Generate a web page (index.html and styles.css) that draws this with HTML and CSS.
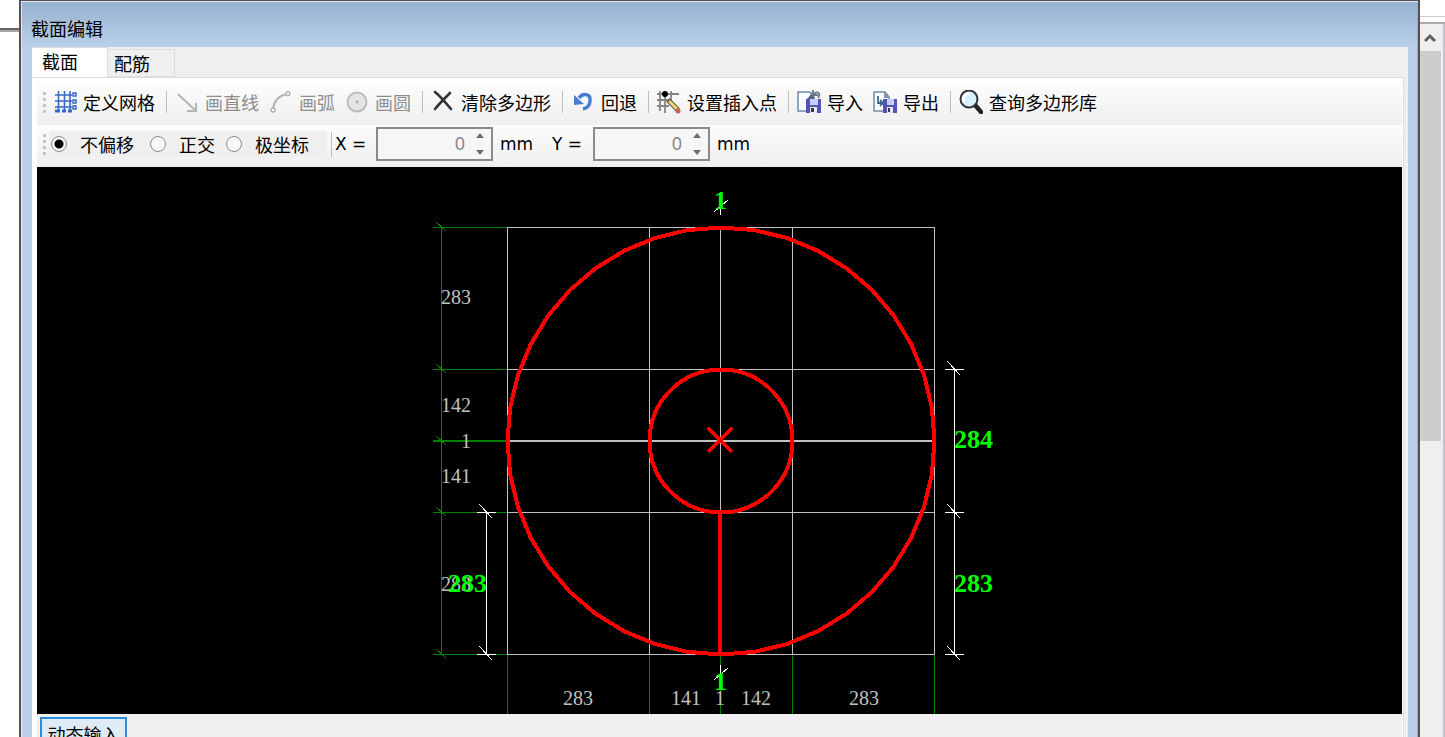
FILE: index.html
```html
<!DOCTYPE html>
<html lang="zh-CN">
<head>
<meta charset="utf-8">
<title>截面编辑</title>
<link rel="stylesheet" href="styles.css">
</head>
<body>
<div class="desktop">
  <div class="backdrop-left"></div>
  <section class="dialog">
    <header class="titlebar">截面编辑</header>
    <div class="client">
      <nav class="tabs" role="tablist">
        <button class="tab tab-active" role="tab" aria-selected="true">截面</button>
        <button class="tab" role="tab" aria-selected="false">配筋</button>
      </nav>
      <main class="panel">
        <div class="toolbar">
          <span class="grip"></span>
          <button class="tool"><svg class="icon" viewBox="0 0 24 24"><g stroke="#3a68c4" stroke-width="1.600" fill="none"><path d="M5.500 1v20M11.500 1v20M17 1v20M2 5h17M2 11h17M2 17h17"/><path d="M2 21h5M9 21h4M15 21h4" stroke-width="3"/><path d="M20 3h3v3h-3zM20 10h3v3h-3zM20 16h3v3h-3z" fill="#fff" stroke-width="1.500"/></g></svg>定义网格</button>
          <span class="sep"></span>
          <button class="tool" disabled><svg class="icon" viewBox="0 0 24 24"><path d="M3 4l17 16M21 13v8h-9" fill="none" stroke="#b4b4b4" stroke-width="2"/></svg>画直线</button>
          <button class="tool" disabled><svg class="icon" viewBox="0 0 24 24"><path d="M4 19C5 11 9 6 18 4" fill="none" stroke="#b4b4b4" stroke-width="2"/><g fill="#fff" stroke="#b4b4b4" stroke-width="1.500"><circle cx="4" cy="20" r="2"/><circle cx="19" cy="3.500" r="2"/></g></svg>画弧</button>
          <button class="tool" disabled><svg class="icon" viewBox="0 0 24 24"><circle cx="12" cy="12" r="9.500" fill="#e4e4e4" stroke="#bcbcbc" stroke-width="2"/><circle cx="12" cy="12" r="1.500" fill="#aaa"/></svg>画圆</button>
          <span class="sep"></span>
          <button class="tool"><svg class="icon" viewBox="0 0 24 24"><path d="M4 2c5 4 11 11 16 17M19 3C14 8 8 14 4 19" fill="none" stroke="#333" stroke-width="2.600" stroke-linecap="round"/></svg>清除多边形</button>
          <span class="sep"></span>
          <button class="tool"><svg class="icon" viewBox="0 0 24 24"><path d="M8 8C12 2 20 4 19 11c0 5-3 7-7 8" fill="none" stroke="#4a7dd0" stroke-width="3.500"/><path d="M3 5v10l10-1z" fill="#4a7dd0"/></svg>回退</button>
          <span class="sep"></span>
          <button class="tool"><svg class="icon" viewBox="0 0 24 24"><path d="M3 1v20M8 1v22M14 1v12M0 4h22M0 10h14M0 16h12" fill="none" stroke="#858585" stroke-width="1.800"/><circle cx="8" cy="4" r="3" fill="#000"/><path d="M11 10l10 10" stroke="#56503e" stroke-width="5"/><path d="M12 11l8 8" stroke="#f2d777" stroke-width="3"/><circle cx="21" cy="21" r="2.500" fill="#c56555"/></svg>设置插入点</button>
          <span class="sep"></span>
          <button class="tool"><svg class="icon" viewBox="0 0 24 24"><path d="M1 2h12l4 5v14H1z" fill="#fafcff" stroke="#7188a6" stroke-width="1.500"/><path d="M10 9l5-6 3 6z" fill="#536981"/><path d="M17 4c4-4 7 0 4 4M16 0v5h5" fill="none" stroke="#69788c" stroke-width="1.800"/><path d="M9 9h15v14H9z" fill="#5554b4"/><path d="M13 9h8v6h-8z" fill="#c6cef8"/><path d="M13 17h7v6h-7z" fill="#e7e8f4"/><path d="M14 18h3v4h-3z" fill="#363657"/></svg>导入</button>
          <button class="tool"><svg class="icon" viewBox="0 0 24 24"><path d="M1 2h11l4 5v14H1z" fill="#fafcff" stroke="#7188a6" stroke-width="1.500"/><path d="M11 2v6h5z" fill="#8394aa"/><path d="M5 6v7h4M7 10l3 3-3 3" fill="none" stroke="#40668c" stroke-width="1.800"/><path d="M10 9h14v14H10z" fill="#5554b4"/><path d="M14 9h7v6h-7z" fill="#c6cef8"/><path d="M14 17h6v6h-6z" fill="#e7e8f4"/><path d="M15 18h2v4h-2z" fill="#363657"/></svg>导出</button>
          <span class="sep"></span>
          <button class="tool"><svg class="icon" viewBox="0 0 24 24"><path d="M16 15l6 7" stroke="#222" stroke-width="4.500" stroke-linecap="round"/><circle cx="10" cy="9" r="8.500" fill="#d5f1ff" stroke="#333" stroke-width="2"/><path d="M5 12c-2-5 1-8 5-8" fill="none" stroke="#fff" stroke-width="3"/></svg>查询多边形库</button>
        </div>
        <div class="toolbar">
          <span class="grip"></span>
          <div class="modes">
            <label class="mode"><input type="radio" name="mode" checked>不偏移</label>
            <label class="mode"><input type="radio" name="mode">正交</label>
            <label class="mode"><input type="radio" name="mode">极坐标</label>
          </div>
          <span class="sep sep-coords"></span>
          <label class="axis" for="x">X =</label>
          <span class="spin"><input id="x" type="text" value="0"><span class="arrows"><button class="arrow" aria-label="X +"><svg viewBox="0 0 10 5"><path d="M1 5l4-5 4 5z"/></svg></button><button class="arrow" aria-label="X -"><svg viewBox="0 0 10 5"><path d="M1 0l4 5 4-5z"/></svg></button></span></span>
          <span class="unit">mm</span>
          <label class="axis" for="y">Y =</label>
          <span class="spin"><input id="y" type="text" value="0"><span class="arrows"><button class="arrow" aria-label="Y +"><svg viewBox="0 0 10 5"><path d="M1 5l4-5 4 5z"/></svg></button><button class="arrow" aria-label="Y -"><svg viewBox="0 0 10 5"><path d="M1 0l4 5 4-5z"/></svg></button></span></span>
          <span class="unit">mm</span>
        </div>
        <svg class="canvas" viewBox="37 167 1365 547">
          <defs>
            <g id="tick"><path d="M-9.500 0H9.500M-7 -8L6 6"/></g>
            <path id="quarter" d="M0 -213.500L33.400 -210.900L66 -203L96.900 -190.200L125.500 -172.700L151 -151L172.700 -125.500L190.200 -96.900L203 -66L210.900 -33.400L213.500 0"/>
          </defs>
          <g class="guide">
            <path d="M441.500 227V655M433 227.500H507M433 369.500H507M433 512.500H507M433 654.500H507M507.500 655V714M649.500 655V714M720.500 655V714M792.500 655V714M934.500 655V714"/>
            <path d="M433 441H507" stroke-width="2"/>
            <path d="M436 222l10 9M436 364l10 9M436 436l10 9M436 507l10 9M436 649l10 9"/>
          </g>
          <g class="grid">
            <path d="M507.500 227.500H934.500V654.500H507.500ZM649.500 227V654M720.500 227V654M792.500 227V654M507 369.500H935M507 512.500H935"/>
            <path d="M507 441H935" stroke-width="2"/>
          </g>
          <g class="label">
            <text x="441" y="304">283</text>
            <text x="441" y="412">142</text>
            <text x="461" y="448">1</text>
            <text x="441" y="483">141</text>
            <text x="441" y="591">283</text>
            <text x="563" y="705">283</text>
            <text x="671" y="705">141</text>
            <text x="715" y="705">1</text>
            <text x="741" y="705">142</text>
            <text x="849" y="705">283</text>
          </g>
          <g class="dimension">
            <path d="M486.500 512V654M954.500 369V654M720.500 205V215M714 212l14-12M720.500 665V678M714 680l14-12"/>
            <use href="#tick" x="486.500" y="512.500"/>
            <use href="#tick" x="486.500" y="654.500"/>
            <use href="#tick" x="954.500" y="369.500"/>
            <use href="#tick" x="954.500" y="512.500"/>
            <use href="#tick" x="954.500" y="654.500"/>
          </g>
          <g class="section">
            <g transform="translate(721 441)">
              <use href="#quarter"/>
              <use href="#quarter" transform="rotate(90)"/>
              <use href="#quarter" transform="rotate(180)"/>
              <use href="#quarter" transform="rotate(270)"/>
              <circle r="71.500"/>
            </g>
            <path d="M720 512V654M708 428l24 24M732 428l-24 24"/>
          </g>
          <g class="measure">
            <text x="714" y="209">1</text>
            <text x="714" y="690">1</text>
            <text x="448" y="592">283</text>
            <text x="954" y="448">284</text>
            <text x="954" y="592">283</text>
          </g>
        </svg>
        <footer class="footer"><button class="dynamic">动态输入</button></footer>
      </main>
    </div>
  </section>
  <aside class="scrollbar">
    <div class="scroll-top"></div>
    <button class="scroll-up" aria-label="向上"><svg viewBox="0 0 12 10"><path d="M1 8l5-5 5 5" fill="none" stroke="#606060" stroke-width="3"/></svg></button>
    <div class="thumb"></div>
  </aside>
</div>
</body>
</html>
```

FILE: styles.css
```css
* { box-sizing: border-box; }
body {
  margin: 0;
  background: #fff;
  color: #000;
  font: 18px/24px "Noto Sans CJK SC", sans-serif;
}
button, input { font: inherit; color: inherit; }
button { padding: 0; border: 0; background: none; }
.desktop { display: flex; height: 100vh; overflow: hidden; }
.backdrop-left {
  width: 19px;
  height: 32px;
  background: linear-gradient(#fff 28px, #666 28px 30px, #a8a8a8 30px);
}
.dialog {
  flex: 1;
  min-width: 0;
  align-self: flex-start;
  border: 2px solid #554f55;
  border-top-width: 1px;
  border-bottom: 0;
  background: #b9d0e8;
  box-shadow: inset 1px 1px #e6e6ee, inset -1px 0 #55cbe5;
}
.titlebar {
  height: 45px;
  margin: 1px 1px 0;
  padding: 14px 9px 0;
  background: linear-gradient(#99b4d1 10%, #b9d1ea);
}
.client {
  margin: 0 10px 0 11px;
  padding-right: 4px;
  background: #efefef;
}
.tabs { display: flex; align-items: flex-end; height: 30px; }
.tab {
  width: 67px;
  height: 28px;
  padding-left: 6px;
  text-align: left;
  border: 1px solid #dcdcdc;
  border-left: 0;
}
.tab-active {
  width: 76px;
  height: 30px;
  padding-left: 10px;
  padding-bottom: 4px;
  background: #fff;
  border-bottom: 0;
}
.panel {
  padding: 5px 1px 0 5px;
  background: #fff;
  border-top: 1px solid #dcdcdc;
  border-right: 1px solid #dcdcdc;
}
.toolbar {
  display: flex;
  align-items: center;
  height: 42px;
  padding: 0 0 4px 6px;
  background: linear-gradient(#fcfcfc, #efefef);
}
.grip {
  width: 3px;
  height: 21px;
  margin-right: 7px;
  background: repeating-linear-gradient(#c4c4c4 0 3px, transparent 3px 6px);
}
.tool {
  display: flex;
  align-items: center;
  gap: 6px;
  margin-right: 10px;
  white-space: nowrap;
}
.tool:disabled { color: #8d8d8d; }
.icon { width: 24px; height: 24px; flex: none; }
.sep {
  width: 1px;
  height: 22px;
  margin: 0 8px 0 1px;
  background: #bdbdbd;
}
.modes {
  display: flex;
  align-items: center;
  height: 26px;
  width: 278px;
  margin-left: -4px;
  padding-left: 2px;
  background: #efefef;
}
.mode { display: flex; align-items: center; white-space: nowrap; margin-right: 16px; }
.mode:nth-child(2) { margin-right: 11px; }
.mode input {
  appearance: none;
  width: 16px;
  height: 16px;
  margin: 0 13px 0 0;
  border: 1px solid #8a8a8a;
  border-radius: 50%;
  background: #f8f8f8;
}
.mode input:checked { background: radial-gradient(circle, #000 0 4px, #f8f8f8 5px); }
.sep-coords { height: 25px; margin: 0 3px 0 4px; }
.axis, .unit { font: 17px/24px "DejaVu Sans", sans-serif; white-space: nowrap; }
.axis { width: 41px; }
.unit { width: 58px; padding-left: 7px; }
.spin {
  display: flex;
  width: 117px;
  height: 34px;
  border: 2px solid #8a8a8a;
  background: #f6f6f6;
}
.spin input {
  flex: 1;
  min-width: 0;
  padding: 0 10px 3px 0;
  border: 0;
  background: none;
  color: #888;
  font: 18px/24px "Noto Sans", sans-serif;
  text-align: right;
}
.arrows {
  display: flex;
  flex-direction: column;
  justify-content: space-between;
  width: 16px;
  padding: 4px 0;
}
.arrow { display: flex; width: 10px; height: 5px; }
.arrow svg { width: 10px; height: 5px; fill: #6c6c6c; }
.spin + .unit + .axis { margin-left: 1px; }
.canvas { display: block; width: 100%; height: auto; background: #000; }
.canvas path, .canvas circle { fill: none; shape-rendering: crispEdges; }
.guide { stroke: #008000; }
.grid { stroke: #c0c0c0; }
.dimension { stroke: #fff; }
.section { stroke: #f00; stroke-width: 4px; }
.label { fill: #c0c0c0; font: 20px "Liberation Serif", serif; }
.measure { fill: #0f0; font: bold 26px "Liberation Serif", serif; }
.footer { padding: 3px; background: #efefef; }
.dynamic {
  display: block;
  width: 87px;
  height: 34px;
  border: 2px solid #2b8bdc;
  background: #e0ecf5;
}
.scrollbar {
  width: 25px;
  background: #efefef;
  border-right: 2px solid #c4c4c8;
}
.scroll-top {
  height: 24px;
  margin-right: -2px;
  background: linear-gradient(#fff 16px, #ccc 16px 17px, #fff 17px 22px, #aaa 22px);
}
.scroll-up {
  display: flex;
  align-items: center;
  justify-content: center;
  width: 20px;
  height: 27px;
}
.scroll-up svg { width: 12px; height: 10px; }
.thumb { width: 21px; height: 390px; background: #cdcdcd; }
```
